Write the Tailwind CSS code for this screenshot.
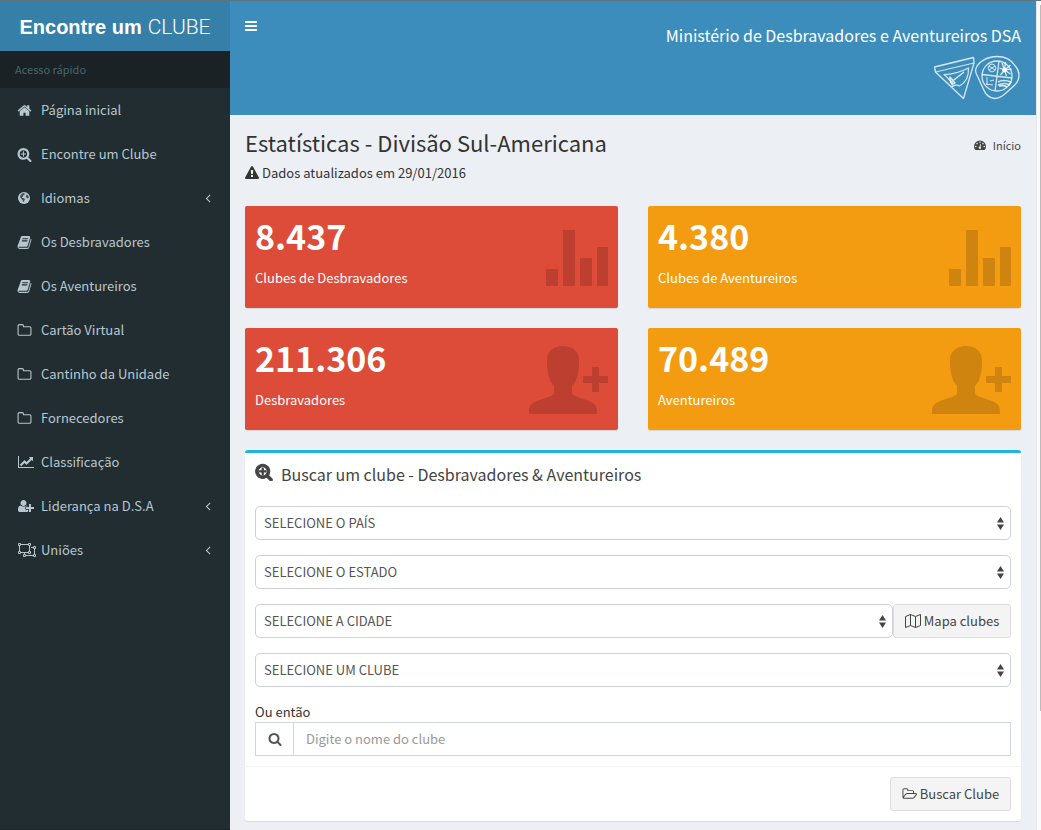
<!DOCTYPE html>
<html lang="pt-BR">
<head>
<meta charset="utf-8">
<meta name="viewport" content="width=device-width, initial-scale=1">
<title>Encontre um Clube</title>
<script src="https://cdn.jsdelivr.net/npm/@tailwindcss/browser@4"></script>
</head>
<body class="flex min-h-screen border-t border-[#5d7482] bg-[#ecf0f5] font-['Noto_Sans_CJK_SC','Noto_Sans',sans-serif] text-[13px] leading-5 text-[#333]">
<svg class="hidden" aria-hidden="true">
  <symbol id="search-plus" viewBox="0 0 1792 1792"><path d="M1088 800v64q0 13-9.5 22.5t-22.5 9.5h-224v224q0 13-9.5 22.5t-22.5 9.5h-64q-13 0-22.5-9.5t-9.5-22.5v-224h-224q-13 0-22.5-9.5t-9.5-22.5v-64q0-13 9.5-22.5t22.5-9.5h224v-224q0-13 9.5-22.5t22.5-9.5h64q13 0 22.5 9.5t9.5 22.5v224h224q13 0 22.5 9.5t9.5 22.5zm128 32q0-185-131.5-316.5t-316.5-131.5-316.5 131.5-131.5 316.5 131.5 316.5 316.5 131.5 316.5-131.5 131.5-316.5zm512 832q0 53-37.5 90.5t-90.5 37.5q-54 0-90-38l-343-342q-179 124-399 124-143 0-273.5-55.5t-225-150-150-225-55.5-273.5 55.5-273.5 150-225 225-150 273.5-55.5 273.5 55.5 225 150 150 225 55.5 273.5q0 220-124 399l343 343q37 37 37 90z"/></symbol>
  <symbol id="book" viewBox="0 0 1792 1792"><path d="M1703 478q40 57 18 129l-275 906q-19 64-76.5 107.5t-122.5 43.5h-923q-77 0-148.5-53.5t-99.5-131.5q-24-67-2-127 0-4 3-27t4-37q1-8-3-21.5t-3-19.5q2-11 8-21t16.5-23.5 16.5-23.5q23-38 45-91.5t30-91.5q3-10 .5-30t-.5-28q3-11 17-28t17-23q21-36 42-92t25-90q1-9-2.5-32t.5-28q4-13 22-30.5t22-22.5q19-26 42.5-84.5t27.5-96.5q1-8-3-25.5t-2-26.5q2-8 9-18t18-23 17-21q8-12 16.5-30.5t15-35 16-36 19.5-32 26.5-23.5 36-11.5 47.5 5.5l-1 3q38-9 51-9h761q74 0 114 56t18 130l-274 906q-36 119-71.5 153.5t-128.5 34.5h-869q-27 0-38 15-11 16-1 43 24 70 144 70h923q29 0 56-15.5t35-41.5l300-987q7-22 5-57 38 15 59 43zm-1064 2q-4 13 2 22.5t20 9.5h608q13 0 25.5-9.5t16.5-22.5l21-64q4-13-2-22.5t-20-9.5h-608q-13 0-25.5 9.5t-16.5 22.5zm-83 256q-4 13 2 22.5t20 9.5h608q13 0 25.5-9.5t16.5-22.5l21-64q4-13-2-22.5t-20-9.5h-608q-13 0-25.5 9.5t-16.5 22.5z"/></symbol>
  <symbol id="folder" viewBox="0 0 1792 1792"><path d="M1600 1312v-704q0-40-28-68t-68-28h-704q-40 0-68-28t-28-68v-64q0-40-28-68t-68-28h-320q-40 0-68 28t-28 68v960q0 40 28 68t68 28h1216q40 0 68-28t28-68zm128-704v704q0 92-66 158t-158 66h-1216q-92 0-158-66t-66-158v-960q0-92 66-158t158-66h320q92 0 158 66t66 158v32h672q92 0 158 66t66 158z"/></symbol>
  <symbol id="angle" viewBox="0 0 1792 1792"><path d="M1203 544q0 13-10 23l-393 393 393 393q10 10 10 23t-10 23l-50 50q-10 10-23 10t-23-10l-466-466q-10-10-10-23t10-23l466-466q10-10 23-10t23 10l50 50q10 10 10 23z"/></symbol>
  <symbol id="bars" viewBox="0 0 62 57"><path d="M0 39h12v17H0zM17 0h12v56H17zM34 28h12v28H34zM51 17h11v39H51z"/></symbol>
  <symbol id="person-add" viewBox="0 0 80 68"><path d="M35 0c9 0 16 5 16 14 0 5 0 8-1 13-1 6-3 10-6 13v8c4 4 15 5 21 9 4 3 4 6 4 11H1c0-5 0-8 4-11 6-4 17-5 21-9v-8c-3-3-5-7-6-13-1-5-1-8-1-13C19 5 26 0 35 0zM64 21h7v9h9v7h-9v9h-7v-9h-9v-7h9z"/></symbol>
  <symbol id="updown" viewBox="0 0 7 13"><path d="M3.500 0L7 5.500H0zM0 7.500h7L3.500 13z"/></symbol>
</svg>

<aside class="flex w-[230px] shrink-0 flex-col border-b border-[#1a2226] bg-[#222d32] text-[#b8c7ce]">
  <a href="#" class="flex h-[50px] items-baseline justify-center gap-[6px] bg-[#367fa9] text-xl leading-[52px] text-white"><b class="font-['Liberation_Sans',sans-serif] font-bold">Encontre um</b><span class="font-['Roboto',sans-serif] text-[21px] font-light">CLUBE</span></a>
  <div class="h-[37px] bg-[#1a2226] px-[15px] pt-2 text-[11px] text-[#4b646f]">Acesso rápido</div>
  <nav>
    <ul>
      <li><a href="#" class="flex h-11 items-center pl-[17px] pr-[15px]"><span class="w-6 shrink-0"><svg class="h-[15px] w-[15px] fill-current" viewBox="0 0 1792 1792"><path d="M1472 992v480q0 26-19 45t-45 19h-384v-384h-256v384h-384q-26 0-45-19t-19-45v-480q0-1 .5-3t.5-3l575-474 575 474q1 2 1 6zm223-69l-62 74q-8 9-21 11h-3q-13 0-21-7l-692-577-692 577q-12 8-24 7-13-2-21-11l-62-74q-8-10-7-23.500t11-21.500l719-599q32-26 76-26t76 26l244 204v-195q0-14 9-23t23-9h192q14 0 23 9t9 23v408l219 182q10 8 11 21.500t-7 23.500z"/></svg></span>Página inicial</a></li>
      <li><a href="#" class="flex h-11 items-center pl-[17px] pr-[15px]"><span class="w-6 shrink-0"><svg class="h-[15px] w-[15px] fill-current"><use href="#search-plus"/></svg></span>Encontre um Clube</a></li>
      <li><a href="#" class="flex h-11 items-center pl-[17px] pr-[15px]"><span class="w-6 shrink-0"><svg class="h-[14px] w-[14px]" viewBox="0 0 14 14"><circle cx="7" cy="7" r="6" fill="currentColor"/><path d="M6 2l2 .4-.6 1.300-1.200.5-.3 1.300-1 .5.6 1 1.500.2.900.9-.5 1.500-1 1.300-.6-.4-.1-1.600L4.200 7.700 3.200 6.200l.2-2zM9.800 3.400l1.500 1.400.4 1.800-1 1.200-.8-1.400-1.300-.5z" fill="#222d32" opacity=".8"/></svg></span>Idiomas<svg class="ml-auto h-[14px] w-[14px] fill-current"><use href="#angle"/></svg></a></li>
      <li><a href="#" class="flex h-11 items-center pl-[17px] pr-[15px]"><span class="w-6 shrink-0"><svg class="h-[15px] w-[15px] fill-current"><use href="#book"/></svg></span>Os Desbravadores</a></li>
      <li><a href="#" class="flex h-11 items-center pl-[17px] pr-[15px]"><span class="w-6 shrink-0"><svg class="h-[15px] w-[15px] fill-current"><use href="#book"/></svg></span>Os Aventureiros</a></li>
      <li><a href="#" class="flex h-11 items-center pl-[17px] pr-[15px]"><span class="w-6 shrink-0"><svg class="h-[15px] w-[15px] fill-current"><use href="#folder"/></svg></span>Cartão Virtual</a></li>
      <li><a href="#" class="flex h-11 items-center pl-[17px] pr-[15px]"><span class="w-6 shrink-0"><svg class="h-[15px] w-[15px] fill-current"><use href="#folder"/></svg></span>Cantinho da Unidade</a></li>
      <li><a href="#" class="flex h-11 items-center pl-[17px] pr-[15px]"><span class="w-6 shrink-0"><svg class="h-[15px] w-[15px] fill-current"><use href="#folder"/></svg></span>Fornecedores</a></li>
      <li><a href="#" class="flex h-11 items-center pl-[18px] pr-[15px]"><span class="w-[23px] shrink-0"><svg class="h-[14px] w-4 fill-current" viewBox="0 0 2048 1792"><path d="M2048 1536v128h-2048v-1536h128v1408h1920zm-128-1248v435q0 21-19.500 29.500t-35.500-7.500l-121-121-633 633q-10 10-23 10t-23-10l-233-233-416 416-192-192 585-585q10-10 23-10t23 10l233 233 464-464-121-121q-16-16-7.500-35.500t29.500-19.500h435q14 0 23 9t9 23z"/></svg></span>Classificação</a></li>
      <li><a href="#" class="flex h-11 items-center pl-[18px] pr-[15px]"><span class="w-[23px] shrink-0"><svg class="h-[14px] w-4 fill-current" viewBox="0 0 2048 1792"><path d="M704 896q-159 0-271.500-112.500t-112.500-271.500 112.500-271.500 271.500-112.500 271.500 112.500 112.500 271.500-112.500 271.500-271.500 112.500zm960 128h352q13 0 22.500 9.500t9.500 22.500v192q0 13-9.500 22.500t-22.500 9.500h-352v352q0 13-9.500 22.500t-22.500 9.500h-192q-13 0-22.500-9.500t-9.500-22.500v-352h-352q-13 0-22.500-9.500t-9.500-22.500v-192q0-13 9.500-22.500t22.500-9.500h352v-352q0-13 9.500-22.500t22.500-9.500h192q13 0 22.500 9.500t9.500 22.500v352zm-736 224q0 52 38 90t90 38h256v238q-68 50-171 50h-874q-121 0-194-69t-73-190q0-53 3.500-103.500t14-109 26.500-108.500 43-97.500 62-81 85.500-53.500 111.500-20q19 0 39 17 79 61 154.500 91.500t164.500 30.500 164.500-30.500 154.500-91.500q20-17 39-17 132 0 217 96h-223q-52 0-90 38t-38 90v192z"/></svg></span>Liderança na D.S.A<svg class="ml-auto h-[14px] w-[14px] fill-current"><use href="#angle"/></svg></a></li>
      <li><a href="#" class="flex h-11 items-center pl-[18px] pr-[15px]"><span class="w-[23px] shrink-0"><svg class="h-[14px] w-[18px]" viewBox="0 0 18 14" fill="none" stroke="currentColor"><path d="M3 1.500h7M3 9.500h7M1.500 3v5M11.500 3v5M13 4.500h2M16.500 6v5M15 12.500H8M6.500 9.500V11"/><path d="M.5.5h2v2h-2zM10.500.5h2v2h-2zM.5 8.500h2v2h-2zM10.500 8.500h2v2h-2zM15.500 3.500h2v2h-2zM15.500 11.500h2v2h-2zM5.500 11.500h2v2h-2z"/></svg></span>Uniões<svg class="ml-auto h-[14px] w-[14px] fill-current"><use href="#angle"/></svg></a></li>
    </ul>
  </nav>
</aside>

<div class="min-w-0 flex-1">
  <header class="flex h-[114px] items-start justify-between bg-[#3c8dbc] px-[15px] text-white">
    <button type="button" aria-label="Alternar menu" class="pt-[18px]"><svg class="h-[14px] w-3 fill-current" viewBox="128 0 1536 1792"><path d="M1664 1344v128q0 26-19 45t-45 19h-1408q-26 0-45-19t-19-45v-128q0-26 19-45t45-19h1408q26 0 45 19t19 45zm0-512v128q0 26-19 45t-45 19h-1408q-26 0-45-19t-19-45v-128q0-26 19-45t45-19h1408q26 0 45 19t19 45zm0-512v128q0 26-19 45t-45 19h-1408q-26 0-45-19t-19-45v-128q0-26 19-45t45-19h1408q26 0 45 19t19 45z"/></svg></button>
    <div class="flex flex-col items-end pt-6">
      <span class="text-base leading-5">Ministério de Desbravadores e Aventureiros DSA</span>
      <svg class="mt-[10px] h-[46px] w-[88px]" viewBox="0 0 88 46" fill="none" stroke="#fff" stroke-opacity=".8" stroke-linejoin="round">
        <path d="M1.500 12L40.500 2.500 41 8 30.500 43.500 2.500 17z" stroke-width="1.300"/><path d="M2.500 17L41 8"/><path d="M11 19.500q12 0 24.500-6.500.5 13-9 18-3-2-7 .5-1-6-8.500-12z" stroke-width="1.200"/><path d="M17 28l14-11M17 22l5 6-2 1-3-4z" stroke-width="1.500"/>
        <path d="M64 1.500C54 1.500 45 7 42.800 14c-1 4 1 5 3 10l5 11c2 5 6 8 11 8.500 5 0 7-2 10-4.500l10-9c6-6 5-14 .5-19C78 4 71 1.500 64 1.500z" stroke-width="1.300"/><circle cx="64" cy="21" r="15" stroke-width="1.300"/><path d="M66 6l-4 30M49 19.500l30 3.500" stroke-width="1.300"/>
        <path d="M55 13q1-4 4-4t4 4q0 3-4 4-4-1-4-4zM56 11l6 4M56 15l6-4"/><path d="M71.500 15L69 8M71.500 15l1-8M71.500 15l6-5M71.500 15l7-1M71.500 15l6 4M71.500 15l2 6M71.500 15l-4 5M71.500 15l-5-2" stroke-width="1.300"/><circle cx="71.500" cy="15" r="2" fill="#fff"/>
        <path d="M54 22v8M53 29l7 1M57 26l4-1"/><path d="M65 27q5-3 13 0l-2 3q-4-3-11 0M66 31q5-1 8 1" stroke-width="1.700"/>
      </svg>
    </div>
  </header>

  <main class="px-[15px] pb-2">
    <div class="flex items-start justify-between pt-[14px]">
      <div>
        <h1 class="text-[22px] leading-[26px]">Estatísticas - Divisão Sul-Americana</h1>
        <p class="mt-2 flex items-center gap-[3px]"><svg class="h-[14px] w-[14px] fill-current" viewBox="0 0 1792 1792"><path d="M1024 1375v-190q0-14-9.500-23.500t-22.500-9.500h-192q-13 0-22.500 9.500t-9.500 23.500v190q0 14 9.500 23.500t22.500 9.500h192q13 0 22.500-9.500t9.500-23.500zm-2-374l18-459q0-12-10-19-13-11-24-11h-220q-11 0-24 11-10 7-10 21l17 457q0 10 10 16.500t24 6.500h185q14 0 23.500-6.500t10.500-16.500zm-14-934l768 1408q35 63-2 126-17 29-46.500 46t-63.500 17h-1536q-34 0-63.500-17t-46.500-46q-37-63-2-126l768-1408q17-31 47-49t65-18 65 18 47 49z"/></svg>Dados atualizados em 29/01/2016</p>
      </div>
      <a href="#" class="flex items-center gap-[7px] pt-[6px] text-[11px] text-[#444]"><svg class="h-3 w-3" viewBox="0 0 12 12"><path d="M6 1.500a6 6 0 0 0-6 6q0 1.700.9 3.100.2.400.5.400h9.200q.3 0 .5-.4Q12 9.200 12 7.500a6 6 0 0 0-6-6z" fill="currentColor"/><g fill="#ecf0f5"><circle cx="1.800" cy="7.500" r=".8"/><circle cx="3.100" cy="4.600" r=".8"/><circle cx="6" cy="3.300" r=".8"/><circle cx="8.900" cy="4.600" r=".8"/><circle cx="10.200" cy="7.500" r=".8"/><path d="M6.400 5l.7.200-.5 2.600A1.200 1.200 0 1 1 5.600 7.600z"/></g></svg>Início</a>
    </div>

    <section class="mt-[23px] grid grid-cols-2 gap-x-[30px] gap-y-5 text-white">
      <div class="flex h-[102px] justify-between rounded-xs bg-[#dd4b39] px-[10px] shadow-[0_1px_1px_rgba(0,0,0,0.1)]">
        <div><p class="pt-[10px] text-[34px] font-bold leading-10">8.437</p><p class="mt-3">Clubes de Desbravadores</p></div>
        <svg class="mt-6 h-[57px] w-[62px] fill-black/15"><use href="#bars"/></svg>
      </div>
      <div class="flex h-[102px] justify-between rounded-xs bg-[#f39c12] px-[10px] shadow-[0_1px_1px_rgba(0,0,0,0.1)]">
        <div><p class="pt-[10px] text-[34px] font-bold leading-10">4.380</p><p class="mt-3">Clubes de Aventureiros</p></div>
        <svg class="mt-6 h-[57px] w-[62px] fill-black/15"><use href="#bars"/></svg>
      </div>
      <div class="flex h-[102px] justify-between rounded-xs bg-[#dd4b39] px-[10px] shadow-[0_1px_1px_rgba(0,0,0,0.1)]">
        <div><p class="pt-[10px] text-[34px] font-bold leading-10">211.306</p><p class="mt-3">Desbravadores</p></div>
        <svg class="mt-[18px] h-[68px] w-[80px] fill-black/15"><use href="#person-add"/></svg>
      </div>
      <div class="flex h-[102px] justify-between rounded-xs bg-[#f39c12] px-[10px] shadow-[0_1px_1px_rgba(0,0,0,0.1)]">
        <div><p class="pt-[10px] text-[34px] font-bold leading-10">70.489</p><p class="mt-3">Aventureiros</p></div>
        <svg class="mt-[18px] h-[68px] w-[80px] fill-black/15"><use href="#person-add"/></svg>
      </div>
    </section>

    <form class="mt-5 rounded-[3px] border-t-[3px] border-[#1fb5dc] bg-white shadow-[0_1px_1px_rgba(0,0,0,0.1)]">
      <div class="px-[10px] pb-[10px] pt-[10px]">
        <h2 class="flex h-[22px] items-center gap-2 text-base text-[#444]"><svg class="mb-1 h-[18px] w-[18px] overflow-visible fill-current stroke-current stroke-[100px]"><use href="#search-plus"/></svg>Buscar um clube - Desbravadores &amp; Aventureiros</h2>
        <div class="mt-[21px] grid gap-[15px] text-[#555]">
          <div class="relative"><select aria-label="País" class="h-[34px] w-full appearance-none rounded-[5px] border border-[#ced1d8] bg-white pl-2 pr-6 text-[13px]"><option>SELECIONE O PAÍS</option></select><svg class="pointer-events-none absolute right-[7px] top-[11px] h-[13px] w-[7px] fill-[#444]"><use href="#updown"/></svg></div>
          <div class="relative"><select aria-label="Estado" class="h-[34px] w-full appearance-none rounded-[5px] border border-[#ced1d8] bg-white pl-2 pr-6 text-[13px]"><option>SELECIONE O ESTADO</option></select><svg class="pointer-events-none absolute right-[7px] top-[11px] h-[13px] w-[7px] fill-[#444]"><use href="#updown"/></svg></div>
          <div class="flex">
            <div class="relative flex-1"><select aria-label="Cidade" class="h-[34px] w-full appearance-none rounded-[5px] border border-[#ced1d8] bg-white pl-2 pr-6 text-[13px]"><option>SELECIONE A CIDADE</option></select><svg class="pointer-events-none absolute right-[7px] top-[11px] h-[13px] w-[7px] fill-[#444]"><use href="#updown"/></svg></div>
            <button type="button" class="flex h-[34px] w-[118px] items-center justify-center gap-[3px] rounded-[3px] border border-[#ddd] bg-[#f4f4f4] text-[#444]"><svg class="h-[14px] w-4" viewBox="0 0 16 14" fill="none" stroke="currentColor" stroke-linejoin="round"><path d="M.5 2.500L5.500.5l5 2 5-2v11l-5 2-5-2-5 2zM5.500.5v11M10.500 2.500v11"/></svg>Mapa clubes</button>
          </div>
          <div class="relative"><select aria-label="Clube" class="h-[34px] w-full appearance-none rounded-[5px] border border-[#ced1d8] bg-white pl-2 pr-6 text-[13px]"><option>SELECIONE UM CLUBE</option></select><svg class="pointer-events-none absolute right-[7px] top-[11px] h-[13px] w-[7px] fill-[#444]"><use href="#updown"/></svg></div>
        </div>
        <label for="nome" class="mt-[15px] block">Ou então</label>
        <div class="flex h-[34px] border border-[#d2d6de]">
          <span class="flex w-[38px] items-center justify-center border-r border-[#d2d6de] text-[#555]"><svg class="h-[14px] w-[14px] fill-current" viewBox="0 0 1792 1792"><path d="M1216 832q0-185-131.500-316.500t-316.500-131.500-316.500 131.500-131.500 316.500 131.500 316.500 316.500 131.500 316.500-131.500 131.500-316.500zm512 832q0 52-38 90t-90 38q-54 0-90-38l-343-342q-179 124-399 124-143 0-273.500-55.500t-225-150-150-225-55.500-273.500 55.500-273.500 150-225 225-150 273.500-55.500 273.500 55.500 225 150 150 225 55.500 273.500q0 220-124 399l343 343q37 37 37 90z"/></svg></span>
          <input id="nome" type="text" placeholder="Digite o nome do clube" class="min-w-0 flex-1 px-3 placeholder:text-[#999]">
        </div>
      </div>
      <div class="flex justify-end border-t border-[#f4f4f4] p-[10px]">
        <button type="submit" class="flex h-[34px] w-[121px] items-center justify-center gap-[3px] rounded-[3px] border border-[#ddd] bg-[#f4f4f4] text-[#444]"><svg class="h-[14px] w-[15px] fill-current" viewBox="0 0 1984 1792"><path d="M1845 931q0-35-53-35h-1088q-40 0-85.500 21.500t-71.500 52.500l-294 363q-18 24-18 40 0 35 53 35h1088q40 0 86-22t71-53l294-363q18-22 18-39zm-1141-163h768v-160q0-40-28-68t-68-28h-576q-40 0-68-28t-28-68v-64q0-40-28-68t-68-28h-320q-40 0-68 28t-28 68v853l256-315q44-53 116-87.500t140-34.500zm1269 163q0 62-46 120l-295 363q-43 53-116 87.500t-140 34.500h-1088q-92 0-158-66t-66-158v-960q0-92 66-158t158-66h320q92 0 158 66t66 158v32h544q92 0 158 66t66 158v160h192q54 0 99 24.500t67 70.500q15 32 15 68z"/></svg>Buscar Clube</button>
      </div>
    </form>
  </main>
</div>
<div class="flex w-[5px] shrink-0 justify-end border-l border-[#e8e8e8] bg-[#fafafa] pt-1" aria-hidden="true"><div class="h-[706px] w-px bg-[#bbb]"></div></div>
</body>
</html>
